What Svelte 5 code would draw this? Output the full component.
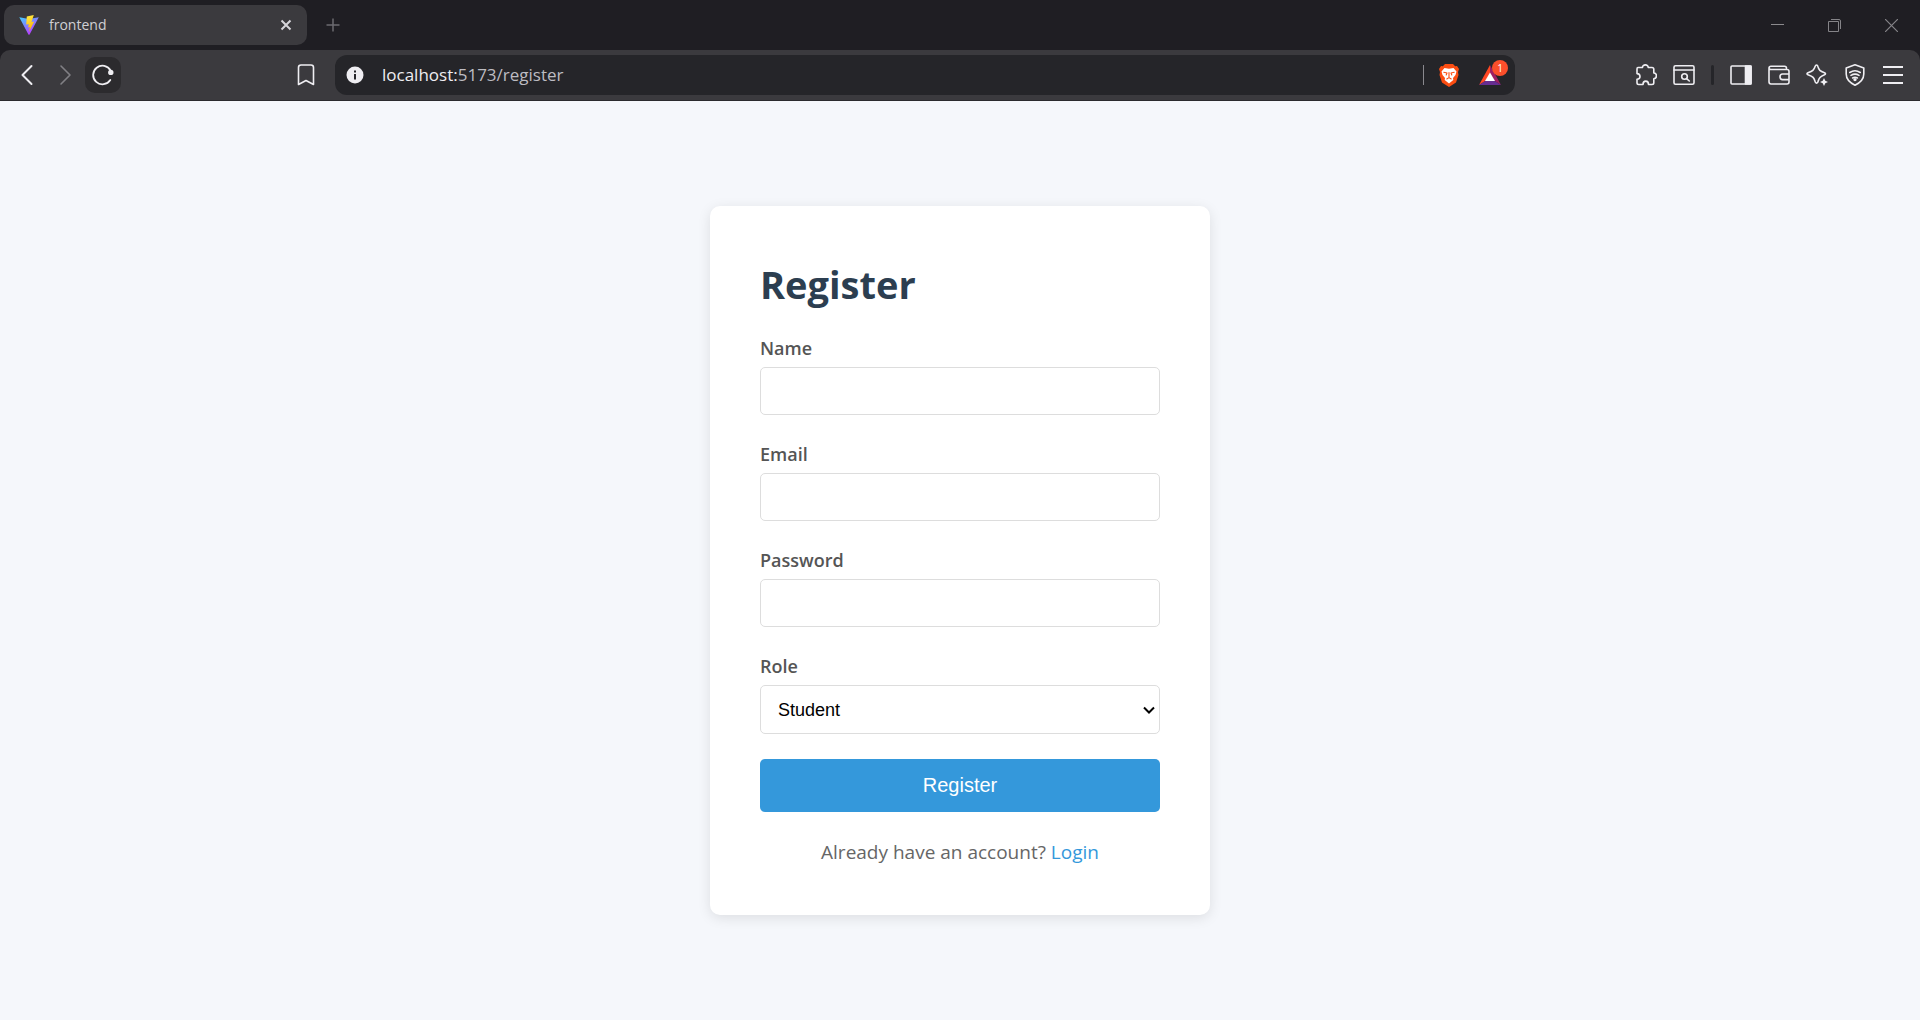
<script>
  let name = $state('');
  let email = $state('');
  let password = $state('');
  let role = $state('student');
  let address = $state('localhost:5173/register');
</script>

<div class="window">
  <div class="chrome">
    <header class="tabs">
      <div class="tab">
        <svg width="20" height="20" viewBox="0 0 20 20" aria-hidden="true">
          <defs>
            <linearGradient id="vite" x1="0" y1="0" x2="0.6" y2="1">
              <stop offset="0" stop-color="#41d1ff" />
              <stop offset="1" stop-color="#bd34fe" />
            </linearGradient>
            <linearGradient id="bolt" x1="0.4" y1="0" x2="0.6" y2="1">
              <stop offset="0" stop-color="#ffea3f" />
              <stop offset="1" stop-color="#ffa800" />
            </linearGradient>
          </defs>
          <path d="M.3 2.2 9.4 19.4q.6.9 1.2 0L19.8 2.2 10 4Z" fill="url(#vite)" />
          <path d="m14.8 0-7 1.400-.6 8.200 2.600-.4-.7 3.300 1.800-.5-1 5 5.300-10.500-2.700.6Z" fill="url(#bolt)" />
        </svg>
        <span class="tab-title">frontend</span>
        <button class="tab-close" aria-label="Close tab">
          <svg width="12" height="12" viewBox="0 0 12 12"><path d="m1.500 1.500 9 9m0-9-9 9" stroke="#d6d5da" stroke-width="2" /></svg>
        </button>
      </div>
      <button class="new-tab" aria-label="New tab">
        <svg width="14" height="14" viewBox="0 0 14 14"><path d="M7 .5v13M.5 7h13" stroke="#6c6b70" stroke-width="1.5" /></svg>
      </button>
      <div class="controls">
        <button aria-label="Minimize"><svg width="13" height="13" viewBox="0 0 13 13"><path d="M0 5.500h13" stroke="#8b8a8d" /></svg></button>
        <button aria-label="Restore">
          <svg width="13" height="13" viewBox="0 0 13 13" fill="none" stroke="#858488">
            <path d="M.5 2.500h10v10H.5z" /><path d="M3 .5h8q1.500 0 1.500 1.500v8" />
          </svg>
        </button>
        <button aria-label="Close window"><svg width="13" height="13" viewBox="0 0 13 13"><path d="m0 0 13 13m0-13L0 13" stroke="#858488" stroke-width="1.2" /></svg></button>
      </div>
    </header>

    <nav class="toolbar" aria-label="Browser toolbar">
      <div class="left">
        <button aria-label="Back"><svg viewBox="0 0 22 22"><path d="m15.500 2-9 9 9 9" stroke-width="2" /></svg></button>
        <button class="dim" aria-label="Forward"><svg viewBox="0 0 22 22"><path d="m7 2 9 9-9 9" stroke-width="1.6" /></svg></button>
        <button class="reload" aria-label="Reload">
          <svg viewBox="0 0 22 22"><path d="M18.300 16A9.300 9.300 0 1 1 18.600 6.500" stroke-width="1.8" /><circle class="solid" cx="18.800" cy="8.400" r="1.900" /></svg>
        </button>
        <button class="bookmark" aria-label="Bookmark this page">
          <svg viewBox="0 0 22 22"><path d="M6 1h10q2.500 0 2.500 2.500V20.500L11 16.500 3.500 20.500V3.500Q3.500 1 6 1Z" stroke-width="1.6" /></svg>
        </button>
      </div>

      <div class="address">
        <button class="info" aria-label="Site information">
          <svg viewBox="0 0 18 18"><circle class="solid" cx="9" cy="9" r="8.500" stroke="none" /><path d="M9 8v5.500M9 4.500v2" stroke="#252529" stroke-width="2" stroke-linecap="butt" /></svg>
        </button>
        <div class="url">
          <span aria-hidden="true">localhost:<i>5173/register</i></span>
          <input aria-label="Address" bind:value={address} />
        </div>
        <i class="rule"></i>
        <button class="shields" aria-label="Brave Shields">
          <svg viewBox="0 0 20 23">
            <path d="M6 0h8l2.200 2.200L18 2l2 3-1 3 .5 3-2.500 7.500L10 23l-7-4.500L.5 11 1 8 0 5l2-3 1.800.2Z" fill="#fb4d12" stroke="none" />
            <path d="M5.500 4 10 4.800l4.500-.8 3 3.500-1 3.500-2.500 3 .3 2L10 19.500 5.700 16l.3-2-2.500-3-1-3.500Z" fill="#fff" stroke="none" />
            <path d="m4.800 8.300 3.200.7-.8 2M15.200 8.300 12 9l.8 2M10 8.500v5M7.800 15l2.200-1.400 2.200 1.400" stroke="#fb4d12" stroke-width="1.1" />
          </svg>
        </button>
        <button class="rewards" aria-label="Brave Rewards, 1 notification">
          <svg viewBox="0 0 22 20">
            <path d="M11 0 0 20l7-4.500 4-7Z" fill="#ff4724" stroke="none" />
            <path d="m11 0 11 20-7-4.500-4-7Z" fill="#9e1f63" stroke="none" />
            <path d="M0 20h22l-7-4.500H7Z" fill="#662d91" stroke="none" />
            <path d="m11 7.500-5 8.500h10Z" fill="#fff" stroke="none" />
          </svg>
          <b>1</b>
        </button>
      </div>

      <div class="right">
        <button aria-label="Extensions">
          <svg viewBox="0 0 22 22"><path d="M3 3.500h4.500c-.3-3.500 6-3.500 5.700 0H17q1.800 0 1.800 1.800V9c3.500.2 3.500 5.500 0 5.800v4q0 1.700-1.800 1.700h-3.500c0-4.500-5.500-4.500-5.500 0H3.700Q2 20.500 2 18.800V15.300c4-.3 4-5.400 0-5.700V5q0-1.500 1-1.500Z" /></svg>
        </button>
        <button aria-label="Find in page">
          <svg viewBox="0 0 22 22"><rect x="1" y="1.8" width="20" height="18.4" rx="1.5" /><path d="M1 6h20M13.600 14.600l2.700 2.400" /><circle cx="11.500" cy="12.500" r="2.800" /></svg>
        </button>
        <i class="split"></i>
        <button aria-label="Sidebar">
          <svg viewBox="0 0 22 22"><rect x="1" y="2" width="20" height="18" rx="1" /><path class="solid" d="M15.500 2H21v18h-5.500Z" /></svg>
        </button>
        <button aria-label="Wallet">
          <svg viewBox="0 0 22 22"><path d="M18.500 5.500V4.200q0-1.900-2-1.900H3q-2 0-2 2v13.500q0 2.200 2 2.200h16q2 0 2-2V7.500q0-2-2-2H3q-2 0-2-1.500M21 10h-6.500q-2.500 0-2.500 2.800t2.500 2.800H21" /></svg>
        </button>
        <button aria-label="Leo AI">
          <svg viewBox="0 0 22 22"><path d="M10.500 1q1 0 1.300 1.200c1.200 4 2 5 6.700 6.600q2 .9 0 2c-2 .8-3.200 1.300-4.500 2.700-1.200 1.300-1.600 3-2.200 4.600q-1.200 2-2.500 0C7.800 13.500 7.300 12.600 2 10.800q-2-1 0-2C6.800 7 7.800 6.200 9.200 2.200Q9.600 1 10.500 1Z" /><path class="solid" stroke="none" d="m18 14 1.300 2.800L22 18l-2.700 1.200L18 22l-1.300-2.800L14 18l2.700-1.200Z" /></svg>
        </button>
        <button aria-label="VPN">
          <svg viewBox="0 0 22 22"><path d="m11 .8 8.800 3.200v6q0 7-8.800 11.200Q2.200 17 2.200 10V4ZM5.800 8.500q5.200-3.500 10.400 0M7 11.400q4-2.500 8 0M8.700 14q2.300-1.400 4.600 0" /><circle class="solid" cx="11" cy="15.600" r=".9" /></svg>
        </button>
        <button aria-label="Menu"><svg viewBox="0 0 22 22"><path d="M1 3h20M1 11h20M1 19h20" stroke-linecap="butt" stroke-width="1.8" /></svg></button>
      </div>
    </nav>
  </div>

  <main>
    <form class="card" onsubmit={(e) => e.preventDefault()}>
      <h2>Register</h2>
      <div class="field">
        <label for="name">Name</label>
        <input id="name" type="text" bind:value={name} />
      </div>
      <div class="field">
        <label for="email">Email</label>
        <input id="email" type="email" bind:value={email} />
      </div>
      <div class="field">
        <label for="password">Password</label>
        <input id="password" type="password" bind:value={password} />
      </div>
      <div class="field">
        <label for="role">Role</label>
        <div class="select">
          <select id="role" bind:value={role}>
            <option value="student">Student</option>
            <option value="teacher">Teacher</option>
          </select>
          <svg width="12" height="8" viewBox="0 0 12 8" aria-hidden="true"><path d="m1 1.500 5 5 5-5" fill="none" stroke="#000" stroke-width="2" /></svg>
        </div>
      </div>
      <button class="submit" type="submit">Register</button>
      <p>Already have an account? <a href="/login">Login</a></p>
    </form>
  </main>
</div>

<style>
  :global(body) {
    margin: 0;
  }

  .window {
    display: flex;
    flex-direction: column;
    min-height: 100vh;
    background: #f5f7fb;
    font-family: 'Segoe UI', 'Open Sans', 'Noto Sans', sans-serif;
  }

  .chrome {
    background: #1f1e23;
  }

  button {
    border: 0;
    padding: 0;
    background: none;
    cursor: pointer;
  }

  header button,
  nav button {
    display: flex;
    flex: none;
    align-items: center;
    justify-content: center;
  }

  /* tab strip */
  .tabs {
    display: flex;
    align-items: center;
    height: 50px;
    padding-left: 4px;
  }

  .tab {
    display: flex;
    align-items: center;
    box-sizing: border-box;
    width: 303px;
    height: 40px;
    padding: 0 12px 0 15px;
    border-radius: 10px;
    background: #3b3a3e;
  }

  .tab-title {
    flex: 1;
    margin-left: 10px;
    color: #d0cfd4;
    font-size: 14px;
    line-height: 20px;
  }

  .tab-close {
    width: 18px;
    height: 18px;
  }

  .new-tab {
    width: 32px;
    height: 32px;
    margin-left: 10px;
  }

  .controls {
    display: flex;
    margin-left: auto;
  }

  .controls button {
    width: 57px;
    height: 48px;
  }

  /* toolbar */
  .toolbar {
    display: grid;
    grid-template-columns: 335px 1fr 405px;
    align-items: center;
    box-sizing: border-box;
    height: 51px;
    border-bottom: 1px solid #2b2a2e;
    border-radius: 10px 10px 0 0;
    background: #3b3a3e;
  }

  .toolbar svg {
    display: block;
    width: 22px;
    height: 22px;
    fill: none;
    stroke: #efeef2;
    stroke-width: 1.6;
    stroke-linecap: round;
    stroke-linejoin: round;
  }

  .toolbar .solid {
    fill: #efeef2;
  }

  .left {
    display: flex;
    gap: 2px;
    padding: 0 11px 0 9px;
  }

  .left button {
    width: 36px;
    height: 36px;
    border-radius: 10px;
  }

  .left .reload {
    background: #2c2b2e;
  }

  .left .bookmark {
    margin-left: auto;
  }

  .toolbar .dim svg {
    stroke: #818085;
  }

  .address {
    display: flex;
    align-items: center;
    height: 40px;
    box-sizing: border-box;
    padding: 0 14px 0 11px;
    border-radius: 12px;
    background: #252529;
  }

  .toolbar .info svg {
    width: 18px;
    height: 18px;
  }

  .url {
    position: relative;
    flex: 1;
    margin-left: 18px;
    color: #efeef2;
    font-size: 17px;
    line-height: 24px;
  }

  .url i {
    color: #bdbcc2;
    font-style: normal;
  }

  .url input {
    position: absolute;
    inset: 0;
    width: 100%;
    box-sizing: border-box;
    padding: 0;
    border: 0;
    outline: 0;
    background: none;
    color: transparent;
    font: inherit;
  }

  .rule {
    width: 1px;
    height: 20px;
    margin-right: 15px;
    background: #8a898e;
  }

  .shields {
    margin-right: 20px;
  }

  .toolbar .shields svg {
    width: 20px;
    height: 23px;
  }

  .rewards {
    position: relative;
  }

  .toolbar .rewards svg {
    width: 22px;
    height: 20px;
  }

  .rewards b {
    position: absolute;
    top: -5px;
    right: -7px;
    width: 16px;
    height: 16px;
    border-radius: 8px;
    background: #fc4f2b;
    color: #fff;
    font: 10px/16px 'Open Sans', sans-serif;
    text-align: center;
  }

  .right {
    display: flex;
    align-items: center;
    justify-content: flex-end;
    gap: 16px;
    padding-right: 16px;
  }

  .split {
    width: 3px;
    height: 20px;
    border-radius: 2px;
    background: #252529;
  }

  /* page */
  main {
    display: flex;
    flex: 1;
    align-items: center;
    justify-content: center;
  }

  .card {
    box-sizing: border-box;
    width: 100%;
    max-width: 500px;
    padding: 50px;
    border-radius: 10px;
    background: #fff;
    box-shadow: 0 3px 13px rgba(0, 0, 0, 0.1);
  }

  h2 {
    margin: 0 0 22px;
    color: #2c3e50;
    font-size: 38px;
    font-weight: 700;
    line-height: 56px;
  }

  .field {
    margin-bottom: 25px;
  }

  label {
    display: block;
    margin-bottom: 5px;
    color: #555;
    font-size: 18px;
    font-weight: 600;
    line-height: 28px;
  }

  .field input,
  select {
    display: block;
    box-sizing: border-box;
    width: 100%;
    height: 48px;
    padding: 0 17px;
    border: 1px solid #ddd;
    border-radius: 5px;
    background: #fff;
    color: #000;
    font: 18px 'Liberation Sans', Arial, sans-serif;
  }

  .select {
    position: relative;
  }

  select {
    height: 49px;
    appearance: none;
  }

  .select svg {
    position: absolute;
    top: 21px;
    right: 5px;
    pointer-events: none;
  }

  .submit {
    display: block;
    width: 100%;
    height: 53px;
    border-radius: 5px;
    background: #3498db;
    color: #fff;
    font: 20px 'Liberation Sans', Arial, sans-serif;
  }

  p {
    margin: 28px 0 0;
    color: #666;
    font-size: 19px;
    line-height: 25px;
    text-align: center;
  }

  a {
    color: #3498db;
    text-decoration: none;
  }
</style>
